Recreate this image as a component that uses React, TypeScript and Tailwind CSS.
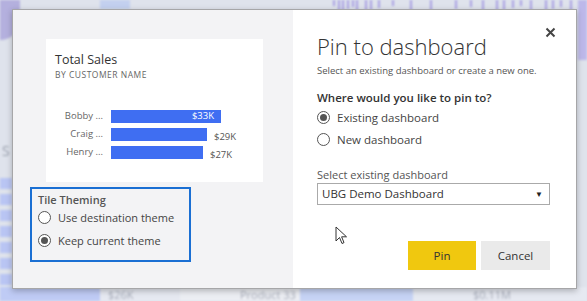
// Power BI "Pin to dashboard" modal over a blurred report canvas.

const font = "font-['Segoe_UI','Open_Sans','Liberation_Sans',sans-serif]";

function Backdrop() {
  // blurred report behind the modal — decorative only
  const bars = [333, 338, 342, 347, 352, 356, 365, 370, 378, 392, 410, 430, 455, 470, 482, 496, 503, 512, 520, 530, 545, 552, 560, 570, 578, 583];
  return (
    <div className="absolute inset-0 blur-[1px]">
      <div className="absolute left-0 top-0 h-[40px] w-[20px] rounded-br-[30px] bg-[#b4b0de]" />
      <div className="absolute left-[100px] top-0 h-[9px] w-[30px] bg-[#c3d0ef]" />
      {bars.map((x, i) => (
        <div
          key={x}
          className="absolute top-0 w-[2px] bg-[#a9a2e4]"
          style={{ left: x, height: 6 + ((i * 7) % 9) }}
        />
      ))}
      <div className="absolute right-0 top-0 h-[60px] w-[9px] bg-[#bdb8ea]" />
      <div className="absolute left-0 top-[178px] flex w-[12px] flex-col gap-[5px]">
        {[0, 1, 2, 3, 4, 5, 6].map((i) => (
          <div key={i} className="h-[11px] bg-[#b9c5f3]" />
        ))}
      </div>
      <div className="absolute left-[2px] top-[140px] text-[14px] text-[#9aa0ad]">S</div>
      <div className="absolute bottom-0 left-0 flex h-[14px] w-full">
        <div className="w-[100px] bg-[#bfcbf5]" />
        <div className="w-[80px] bg-[#e6e9f1] pl-[8px] text-[11px] leading-[16px] text-[#a9aebb]">$26K</div>
        <div className="w-[120px] bg-[#eceef3] pl-[60px] text-[11px] leading-[16px] text-[#a9aebb]">Product 33</div>
        <div className="w-[113px] bg-[#c6d3f5]" />
        <div className="flex-1 bg-[#e6e9f1] pl-[60px] text-[11px] leading-[16px] text-[#a9aebb]">$0.11M</div>
      </div>
    </div>
  );
}

function Radio({ checked, label, size = "text-[11.5px]" }: { checked?: boolean; label: string; size?: string }) {
  return (
    <div className="flex items-center gap-[7px]">
      <span className="flex h-[13px] w-[13px] items-center justify-center rounded-full border border-[#555] bg-white">
        {checked && <span className="h-[7px] w-[7px] rounded-full bg-[#555]" />}
      </span>
      <span className={`${size} leading-[15px] text-[#444]`}>{label}</span>
    </div>
  );
}

function ChartTile() {
  const rows = [
    { name: "Bobby ...", w: 110, value: "$33K", inside: true },
    { name: "Craig ...", w: 96, value: "$29K" },
    { name: "Henry ...", w: 92, value: "$27K" },
  ];
  return (
    <div className="flex h-[143px] w-[217px] flex-col bg-white pl-[9px] pt-[13px]">
      <div className="text-[12.5px] leading-[15px] text-[#333]">Total Sales</div>
      <div className="mt-[2px] text-[8.5px] leading-[11px] tracking-[0.5px] text-[#666]">BY CUSTOMER NAME</div>
      <div className="ml-[-9px] mt-[30px] flex flex-col gap-[5px]">
        {rows.map((r) => (
          <div key={r.name} className="flex h-[13px] items-center">
            <span className="w-[57px] text-right text-[9.5px] text-[#666]">{r.name}</span>
            <span
              className="ml-[8px] flex h-[13px] items-center justify-end bg-[#3f6ef2] pr-[7px] text-[9.5px] text-white"
              style={{ width: r.w }}
            >
              {r.inside && r.value}
            </span>
            {!r.inside && <span className="ml-[7px] mt-[5px] text-[9.5px] text-[#555]">{r.value}</span>}
          </div>
        ))}
      </div>
    </div>
  );
}

function Cursor() {
  return (
    <svg className="absolute left-[42px] top-[216px]" width="13" height="19" viewBox="0 0 13 19">
      <path d="M1 1 L1 15 L4.5 11.5 L7 17.5 L9 16.6 L6.6 10.8 L11.5 10.8 Z" fill="#fff" stroke="#333" strokeWidth="1" strokeLinejoin="round" />
    </svg>
  );
}

export default function App() {
  return (
    <div className={`relative h-[301px] w-[587px] overflow-hidden bg-[#dfe3ec] ${font}`}>
      <Backdrop />
      <div className="relative pl-[12px] pt-[9px]">
        <div className="flex h-[280px] w-[565px] border border-[#a6a6a8] shadow-[0_2px_6px_rgba(0,0,0,0.25)]">
          {/* left: tile preview + theming */}
          <div className="flex w-[280px] flex-col bg-[#f3f3f5] pl-[33px] pt-[29px]">
            <ChartTile />
            <div className="ml-[-16px] mt-[5px] flex h-[75px] w-[161px] flex-col gap-[3px] border-2 border-[#1a6fd3] pl-[6px] pt-[4px]">
              <div className="text-[11px] font-semibold leading-[14px] text-[#555]">Tile Theming</div>
              <div className="flex flex-col gap-[8px]">
                <Radio size="text-[11px]" label="Use destination theme" />
                <Radio size="text-[11px]" checked label="Keep current theme" />
              </div>
            </div>
          </div>

          {/* right: form */}
          <div className="relative flex flex-1 flex-col bg-white pl-[24px] pr-[26px] pt-[21px]">
            <button className="absolute right-[20px] top-[17px] text-[#444]" aria-label="Close">
              <svg width="11" height="11" viewBox="0 0 11 11">
                <path d="M1.5 1.5 L9.5 9.5 M9.5 1.5 L1.5 9.5" stroke="#444" strokeWidth="2" />
              </svg>
            </button>
            <h1 className="text-[22px] font-light leading-[30px] text-[#333]">Pin to dashboard</h1>
            <p className="mt-[3px] text-[9.5px] leading-[13px] text-[#555]">Select an existing dashboard or create a new one.</p>
            <div className="mt-[13px] text-[11.5px] font-semibold leading-[15px] text-[#333]">Where would you like to pin to?</div>
            <div className="mt-[5px] flex flex-col gap-[7px]">
              <Radio checked label="Existing dashboard" />
              <Radio label="New dashboard" />
            </div>
            <div className="mt-[21px] text-[11px] leading-[14px] text-[#555]">Select existing dashboard</div>
            <div className="mt-[1px] flex h-[22px] items-center justify-between border border-[#aaa] pl-[4px] pr-[6px]">
              <span className="text-[11.5px] text-[#333]">UBG Demo Dashboard</span>
              <span className="text-[8px] text-[#222]">▼</span>
            </div>
            <Cursor />
            <div className="mt-[36px] flex justify-end gap-[5px]">
              <button className="h-[29px] w-[68px] bg-[#f0c80f] text-[11.5px] text-[#333]">Pin</button>
              <button className="h-[29px] w-[69px] bg-[#eaeaea] text-[11.5px] text-[#333]">Cancel</button>
            </div>
          </div>
        </div>
      </div>
    </div>
  );
}
